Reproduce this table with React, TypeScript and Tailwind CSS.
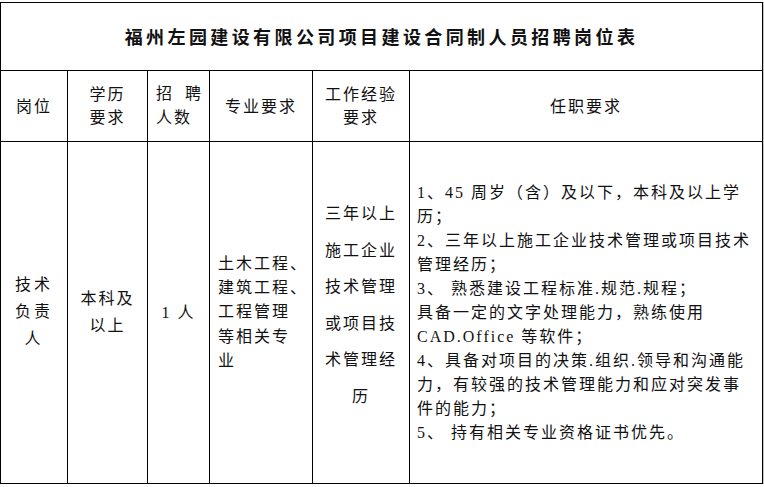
const TEXT =
  "font-['Liberation_Serif','Noto_Sans_CJK_SC',serif] text-[16px] tracking-[2px] text-[#111]";

const CELL = "border-r border-b border-black";

const HEADERS = [
  { key: "post", lines: ["岗位"] },
  { key: "edu", lines: ["学历", "要求"] },
  { key: "count", lines: [] as string[] },
  { key: "major", lines: ["专业要求"] },
  { key: "exp", lines: ["工作经验", "要求"] },
  { key: "duty", lines: ["任职要求"] },
];

const MAJOR_LINES = ["土木工程、", "建筑工程、", "工程管理", "等相关专", "业"];
const EXP_LINES = ["三年以上", "施工企业", "技术管理", "或项目技", "术管理经", "历"];
const DUTY_LINES = [
  "1、45 周岁（含）及以下，本科及以上学",
  "历；",
  "2、三年以上施工企业技术管理或项目技术",
  "管理经历；",
  "3、 熟悉建设工程标准.规范.规程；",
  "具备一定的文字处理能力，熟练使用",
  "CAD.Office 等软件；",
  "4、具备对项目的决策.组织.领导和沟通能",
  "力，有较强的技术管理能力和应对突发事",
  "件的能力；",
  "5、 持有相关专业资格证书优先。",
];

function Lines(props: { lines: string[]; className?: string }) {
  return (
    <div className={props.className}>
      {props.lines.map((line, i) => (
        <div key={i} className="whitespace-nowrap">
          {line}
        </div>
      ))}
    </div>
  );
}

export default function App() {
  return (
    <div className="min-h-screen bg-white pt-[2px]">
      <div className="grid w-[763px] grid-cols-[67px_80px_62px_103px_97px_353px] grid-rows-[68px_71px_342px] border-l border-t border-black shadow-[1px_0_0_#c4c4c4]">
        {/* 标题 */}
        <div className={`${CELL} col-span-6 flex items-center justify-center`}>
          <span className="font-['Noto_Sans_CJK_SC',sans-serif] text-[18px] font-bold tracking-[3.4px] text-[#111]">
            福州左园建设有限公司项目建设合同制人员招聘岗位表
          </span>
        </div>

        {/* 表头 */}
        {HEADERS.map((h) =>
          h.key === "count" ? (
            <div key={h.key} className={`${CELL} flex items-center pl-[8px] pb-[1px] ${TEXT} leading-[23.5px]`}>
              <div>
                <div className="whitespace-nowrap">
                  <span>招</span>
                  <span className="ml-[11px]">聘</span>
                </div>
                <div>人数</div>
              </div>
            </div>
          ) : (
            <div key={h.key} className={`${CELL} flex items-center justify-center text-center ${TEXT} leading-[23px]`}>
              <Lines lines={h.lines} />
            </div>
          ),
        )}

        {/* 内容 */}
        <div className={`${CELL} flex items-center justify-center text-center ${TEXT} tracking-[3px] leading-[26.7px]`}>
          <Lines lines={["技术", "负责", "人"]} />
        </div>
        <div className={`${CELL} flex items-center justify-center text-center ${TEXT} leading-[27px] pb-[1px]`}>
          <Lines lines={["本科及", "以上"]} />
        </div>
        <div className={`${CELL} flex items-center justify-center ${TEXT} tracking-[1.4px]`}>
          1 人
        </div>
        <div className={`${CELL} flex items-center pl-[8px] ${TEXT} tracking-[2.3px] leading-[24.3px]`}>
          <Lines lines={MAJOR_LINES} />
        </div>
        <div className={`${CELL} flex items-center justify-center text-center pb-[14px] ${TEXT} leading-[36.5px]`}>
          <Lines lines={EXP_LINES} />
        </div>
        <div className={`${CELL} flex items-center pl-[7px] ${TEXT} leading-[24px]`}>
          <Lines lines={DUTY_LINES} />
        </div>
      </div>
    </div>
  );
}
